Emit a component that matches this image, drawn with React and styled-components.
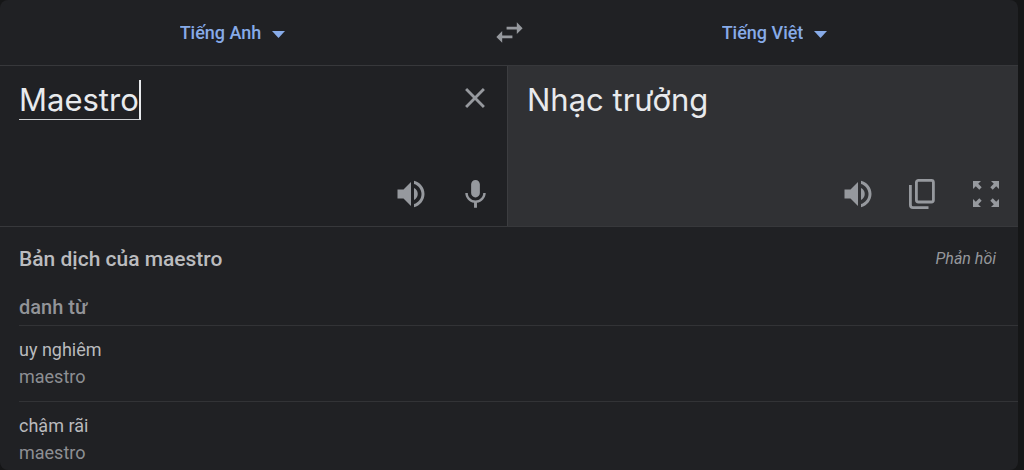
import React, { useState } from 'react';
import styled, { createGlobalStyle } from 'styled-components';
import { MdClose, MdMic, MdSwapHoriz, MdVolumeUp } from 'react-icons/md';

const GlobalStyle = createGlobalStyle`
  * {
    box-sizing: border-box;
  }

  body {
    margin: 0;
    background: #151617;
    font-family: Roboto, 'Noto Sans', sans-serif;
  }
`;

const Card = styled.main`
  margin-right: 6px;
  background: #202124;
  border-radius: 8px;
  overflow: hidden;
`;

const LanguageBar = styled.header`
  display: grid;
  grid-template-columns: 1fr 88px 1fr;
  align-items: center;
  height: 66px;
  border-bottom: 1px solid #37383b;
`;

const LanguageSlot = styled.div`
  display: flex;
  justify-content: center;
  padding-right: ${(props) => (props.$target ? '22px' : '0')};
`;

const LanguagePicker = styled.label`
  display: flex;
  align-items: center;
  color: #87abe8;

  svg {
    margin: 4px 0 0 -13px;
    pointer-events: none;
  }
`;

const LanguageSelect = styled.select`
  appearance: none;
  field-sizing: content;
  margin: 0;
  padding: 0 24px 0 0;
  border: 0;
  outline: 0;
  background: transparent;
  color: inherit;
  font: 500 18px/24px Roboto, 'Noto Sans', sans-serif;
  cursor: pointer;
`;

const IconButton = styled.button`
  display: flex;
  align-items: center;
  justify-content: center;
  width: ${(props) => (props.$wide ? '100%' : '36px')};
  height: 36px;
  padding: 0;
  border: 0;
  background: transparent;
  color: #96999e;
  cursor: pointer;
`;

const Panels = styled.section`
  display: grid;
  grid-template-columns: 507fr 511fr;
  border-bottom: 1px solid #37383b;
`;

const Panel = styled.div`
  display: flex;
  flex-direction: column;
  justify-content: space-between;
  min-width: 0;
  height: 160px;
  padding: 14px 14px 14px 19px;
  background: ${(props) => (props.$target ? '#303134' : 'transparent')};
  border-left: ${(props) => (props.$target ? '1px solid #3c3d40' : '0')};
`;

const PanelRow = styled.div`
  display: flex;
  align-items: flex-start;
  justify-content: space-between;
`;

const Tools = styled.div`
  display: flex;
  justify-content: flex-end;
  gap: 28px;
`;

const SourceInput = styled.input`
  field-sizing: content;
  max-width: 400px;
  height: 40px;
  padding: 0;
  border: 0;
  border-right: 2px solid #e8eaed;
  border-bottom: 1px solid #d0d2d5;
  outline: 0;
  background: transparent;
  color: #e8eaed;
  font: 400 31px/38px Inter, 'Noto Sans', sans-serif;
`;

const Translation = styled.output`
  color: #e8eaed;
  font: 400 31px/40px Inter, 'Noto Sans', sans-serif;
`;

const Results = styled.section`
  padding-left: 19px;
`;

const ResultsHead = styled.div`
  display: flex;
  align-items: center;
  justify-content: space-between;
  height: 64px;
  padding-right: 22px;
`;

const Title = styled.h2`
  margin: 0;
  color: #bbbcbf;
  font-size: 21px;
  font-weight: 500;
  line-height: 28px;
`;

const FeedbackLink = styled.a`
  color: #96989c;
  font-size: 16px;
  font-style: italic;
  line-height: 24px;
  text-decoration: none;
`;

const WordClass = styled.h3`
  margin: 0;
  padding: 4px 0 6px;
  color: #929498;
  font-size: 20px;
  font-weight: 500;
  line-height: 24px;
`;

const EntryList = styled.ul`
  margin: 0;
  padding: 0;
  list-style: none;
`;

const Entry = styled.li`
  padding: 10px 0 11px;
  border-top: 1px solid #323336;
  font-size: 18px;
  line-height: 27px;

  &:last-child {
    padding-bottom: 4px;
  }
`;

const Meaning = styled.div`
  color: #b9babd;
`;

const BackTranslation = styled.div`
  color: #8d8f93;
`;

const entries = [
  { meaning: 'uy nghiêm', back: 'maestro' },
  { meaning: 'chậm rãi', back: 'maestro' },
];

const DropArrow = () => (
  <svg width="13" height="7" viewBox="0 0 13 7" aria-hidden="true">
    <path d="M0 0h13L6.5 7z" fill="currentColor" />
  </svg>
);

const CopyIcon = () => (
  <svg width="36" height="36" viewBox="0 0 36 36" fill="none" stroke="currentColor" strokeWidth="2.8" aria-hidden="true">
    <rect x="12.4" y="4.4" width="17" height="21.6" rx="2" />
    <path d="M6.4 9V29Q6.4 31.6 9 31.6H24.500" />
  </svg>
);

const ExpandIcon = () => (
  <svg width="36" height="36" viewBox="0 0 36 36" fill="currentColor" aria-hidden="true">
    {[0, 90, 180, 270].map((angle) => (
      <path
        key={angle}
        transform={`rotate(${angle} 18 18)`}
        d="M5 5h8l-2.800 2.800 3.500 3.500-2.400 2.400-3.500-3.500L5 13z"
      />
    ))}
  </svg>
);

const Language = ({ label, value, target }) => (
  <LanguageSlot $target={target}>
    <LanguagePicker>
      <LanguageSelect aria-label={label} defaultValue={value}>
        <option>{value}</option>
      </LanguageSelect>
      <DropArrow />
    </LanguagePicker>
  </LanguageSlot>
);

const App = () => {
  const [text, setText] = useState('Maestro');

  return (
    <>
      <GlobalStyle />
      <Card>
        <LanguageBar>
          <Language label="Source language" value="Tiếng Anh" />
          <IconButton $wide aria-label="Swap languages">
            <MdSwapHoriz size={35} />
          </IconButton>
          <Language label="Target language" value="Tiếng Việt" target />
        </LanguageBar>

        <Panels>
          <Panel>
            <PanelRow>
              <SourceInput
                aria-label="Source text"
                spellCheck={false}
                value={text}
                onChange={(e) => setText(e.target.value)}
              />
              <IconButton aria-label="Clear" onClick={() => setText('')}>
                <MdClose size={34} />
              </IconButton>
            </PanelRow>
            <Tools>
              <IconButton aria-label="Listen to source">
                <MdVolumeUp size={36} />
              </IconButton>
              <IconButton aria-label="Speak">
                <MdMic size={35} />
              </IconButton>
            </Tools>
          </Panel>
          <Panel $target>
            <PanelRow>
              <Translation>Nhạc trưởng</Translation>
            </PanelRow>
            <Tools>
              <IconButton aria-label="Listen to translation">
                <MdVolumeUp size={36} />
              </IconButton>
              <IconButton aria-label="Copy">
                <CopyIcon />
              </IconButton>
              <IconButton aria-label="Full screen">
                <ExpandIcon />
              </IconButton>
            </Tools>
          </Panel>
        </Panels>

        <Results>
          <ResultsHead>
            <Title>Bản dịch của maestro</Title>
            <FeedbackLink href="#feedback">Phản hồi</FeedbackLink>
          </ResultsHead>
          <WordClass>danh từ</WordClass>
          <EntryList>
            {entries.map((entry) => (
              <Entry key={entry.meaning}>
                <Meaning>{entry.meaning}</Meaning>
                <BackTranslation>{entry.back}</BackTranslation>
              </Entry>
            ))}
          </EntryList>
        </Results>
      </Card>
    </>
  );
};

export default App;
